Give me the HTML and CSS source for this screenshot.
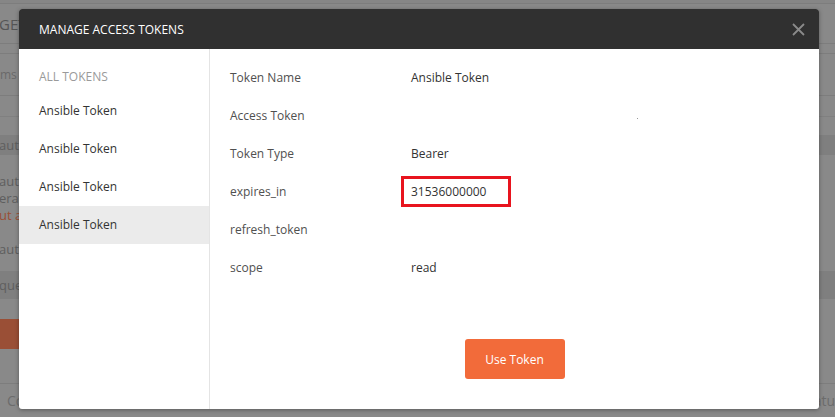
FILE: index.html
```html
<!DOCTYPE html>
<html>
<head>
<meta charset="utf-8">
<link rel="stylesheet" href="styles.css">
</head>
<body>
<div class="app">
  <div class="app-top"></div>
  <div class="app-row app-url"><span class="frag frag-get">GET</span></div>
  <div class="app-row app-gap"></div>
  <div class="app-row app-tabs"><span class="frag frag-ms">ms</span></div>
  <div class="app-row app-sub"></div>
  <div class="app-band"><span class="frag">auth</span></div>
  <div class="app-desc">
    <span class="frag">auth</span>
    <span class="frag">erat</span>
    <span class="frag frag-link">ut a</span>
  </div>
  <div class="app-line"><span class="frag">aut</span></div>
  <div class="app-band app-band2"><span class="frag">que</span></div>
  <div class="app-btnrow"><span class="app-btn">evie</span></div>
  <div class="app-foot"><span class="frag frag-co">Co</span><span class="frag frag-status">tatu</span></div>
</div>

<div class="modal">
  <div class="modal-header">
    <span class="modal-title">MANAGE ACCESS TOKENS</span>
    <svg class="close" width="13" height="13" viewBox="0 0 13 13"><path d="M1 1L12 12M12 1L1 12" stroke="#8a8a8a" stroke-width="1.8" fill="none"/></svg>
  </div>
  <div class="modal-body">
    <div class="sidebar">
      <div class="side-label">ALL TOKENS</div>
      <div class="side-item">Ansible Token</div>
      <div class="side-item">Ansible Token</div>
      <div class="side-item">Ansible Token</div>
      <div class="side-item active">Ansible Token</div>
    </div>
    <div class="details">
      <div class="rows">
        <div class="row"><span class="key">Token Name</span><span class="val">Ansible Token</span></div>
        <div class="row"><span class="key">Access Token</span><span class="val"><span class="dot"></span></span></div>
        <div class="row"><span class="key">Token Type</span><span class="val">Bearer</span></div>
        <div class="row"><span class="key">expires_in</span><span class="val"><span class="highlight">31536000000</span></span></div>
        <div class="row"><span class="key">refresh_token</span><span class="val"></span></div>
        <div class="row"><span class="key">scope</span><span class="val">read</span></div>
      </div>
      <button class="use-btn">Use Token</button>
    </div>
  </div>
</div>
</body>
</html>
```
FILE: styles.css
```css
* { box-sizing: border-box; }
html, body {
  margin: 0;
  padding: 0;
}
body {
  width: 835px;
  height: 417px;
  overflow: hidden;
  position: relative;
  font-family: "Open Sans", "Noto Sans", sans-serif;
  font-size: 12px;
  background: #898989;
}

/* dimmed background app */
.app {
  display: flex;
  flex-direction: column;
  width: 835px;
  height: 417px;
  background: #898989;
  color: #5e5e5e;
}
.app-top {
  flex: none;
  height: 4px;
  border-bottom: 1px solid #7d7d7d;
  background: #868686;
}
.app-row {
  flex: none;
  display: flex;
  align-items: center;
  border-bottom: 1px solid #7d7d7d;
}
.app-url { height: 40px; }
.app-gap { height: 10px; }
.app-tabs { height: 42px; }
.app-sub { height: 21px; border-bottom-color: #808080; }
.frag { white-space: nowrap; }
.frag-get { font-size: 15px; margin-left: -1px; color: #555; }
.frag-ms { margin-left: 0; color: #6a6a6a; }
.app-band {
  flex: none;
  height: 20px;
  margin-top: 18px;
  background: #7f7f7f;
  display: flex;
  align-items: center;
  font-size: 13px;
}
.app-band .frag { margin-left: -1px; }
.app-desc {
  flex: none;
  display: flex;
  flex-direction: column;
  padding-top: 18px;
  line-height: 17px;
  font-size: 13px;
}
.app-desc .frag { margin-left: -1px; }
.frag-link { color: #9a4f36; }
.app-line {
  flex: none;
  padding-top: 17px;
  line-height: 17px;
  font-size: 13px;
}
.app-line .frag { margin-left: -1px; }
.app-band2 {
  height: 28px;
  margin-top: 13px;
}
.app-btnrow {
  flex: none;
  padding-top: 20px;
  display: flex;
}
.app-btn {
  display: inline-flex;
  align-items: center;
  height: 30px;
  width: 60px;
  justify-content: flex-end;
  padding-right: 2px;
  background: #9a4f36;
  color: #c7a79c;
  font-size: 13px;
}
.app-foot {
  margin-top: 34px;
  border-top: 1px solid #7d7d7d;
  flex: 1;
  display: flex;
  justify-content: space-between;
  align-items: center;
  font-size: 14px;
  color: #6c6c6c;
}
.frag-co { margin-left: 7px; }
.frag-status { margin-right: 0; }

/* modal */
.modal {
  position: absolute;
  left: 19px;
  top: 9px;
  width: 800px;
  height: 400px;
  background: #fff;
  border-radius: 3px;
  box-shadow: 0 1px 4px rgba(0,0,0,0.35);
  display: flex;
  flex-direction: column;
  overflow: hidden;
}
.modal-header {
  height: 40px;
  flex: none;
  background: #303030;
  display: flex;
  align-items: center;
  justify-content: space-between;
  padding: 0 14px 0 20px;
}
.modal-title {
  color: #fff;
  font-size: 12px;
}
.close { display: block; }

.modal-body {
  flex: 1;
  display: flex;
}
.sidebar {
  width: 191px;
  flex: none;
  border-right: 1px solid #e4e4e4;
  padding-top: 18px;
}
.side-label {
  height: 25px;
  line-height: 20px;
  padding-left: 20px;
  color: #9a9a9a;
}
.side-item {
  height: 38px;
  line-height: 37px;
  padding-left: 20px;
  color: #333;
}
.side-item.active { background: #ebebeb; }

.details {
  flex: 1;
  display: flex;
  flex-direction: column;
  justify-content: space-between;
  align-items: stretch;
  padding: 9px 0 30px 20px;
}
.row {
  display: flex;
  align-items: center;
  height: 38px;
}
.key {
  width: 181px;
  flex: none;
  color: #505050;
}
.val {
  color: #333;
  display: flex;
  align-items: center;
}
.dot {
  display: inline-block;
  width: 1px;
  height: 1px;
  background: #999;
  margin-left: 226px;
  margin-top: 6px;
}
.highlight {
  display: inline-flex;
  align-items: center;
  width: 110px;
  height: 31px;
  margin-left: -10px;
  padding-left: 7px;
  border: 3px solid #e8141e;
}
.use-btn {
  align-self: center;
  margin-right: 20px;
  width: 100px;
  height: 40px;
  border: none;
  border-radius: 3px;
  background: #f26b3a;
  color: #fff;
  font-family: "Open Sans", "Noto Sans", sans-serif;
  font-size: 12px;
}
```
